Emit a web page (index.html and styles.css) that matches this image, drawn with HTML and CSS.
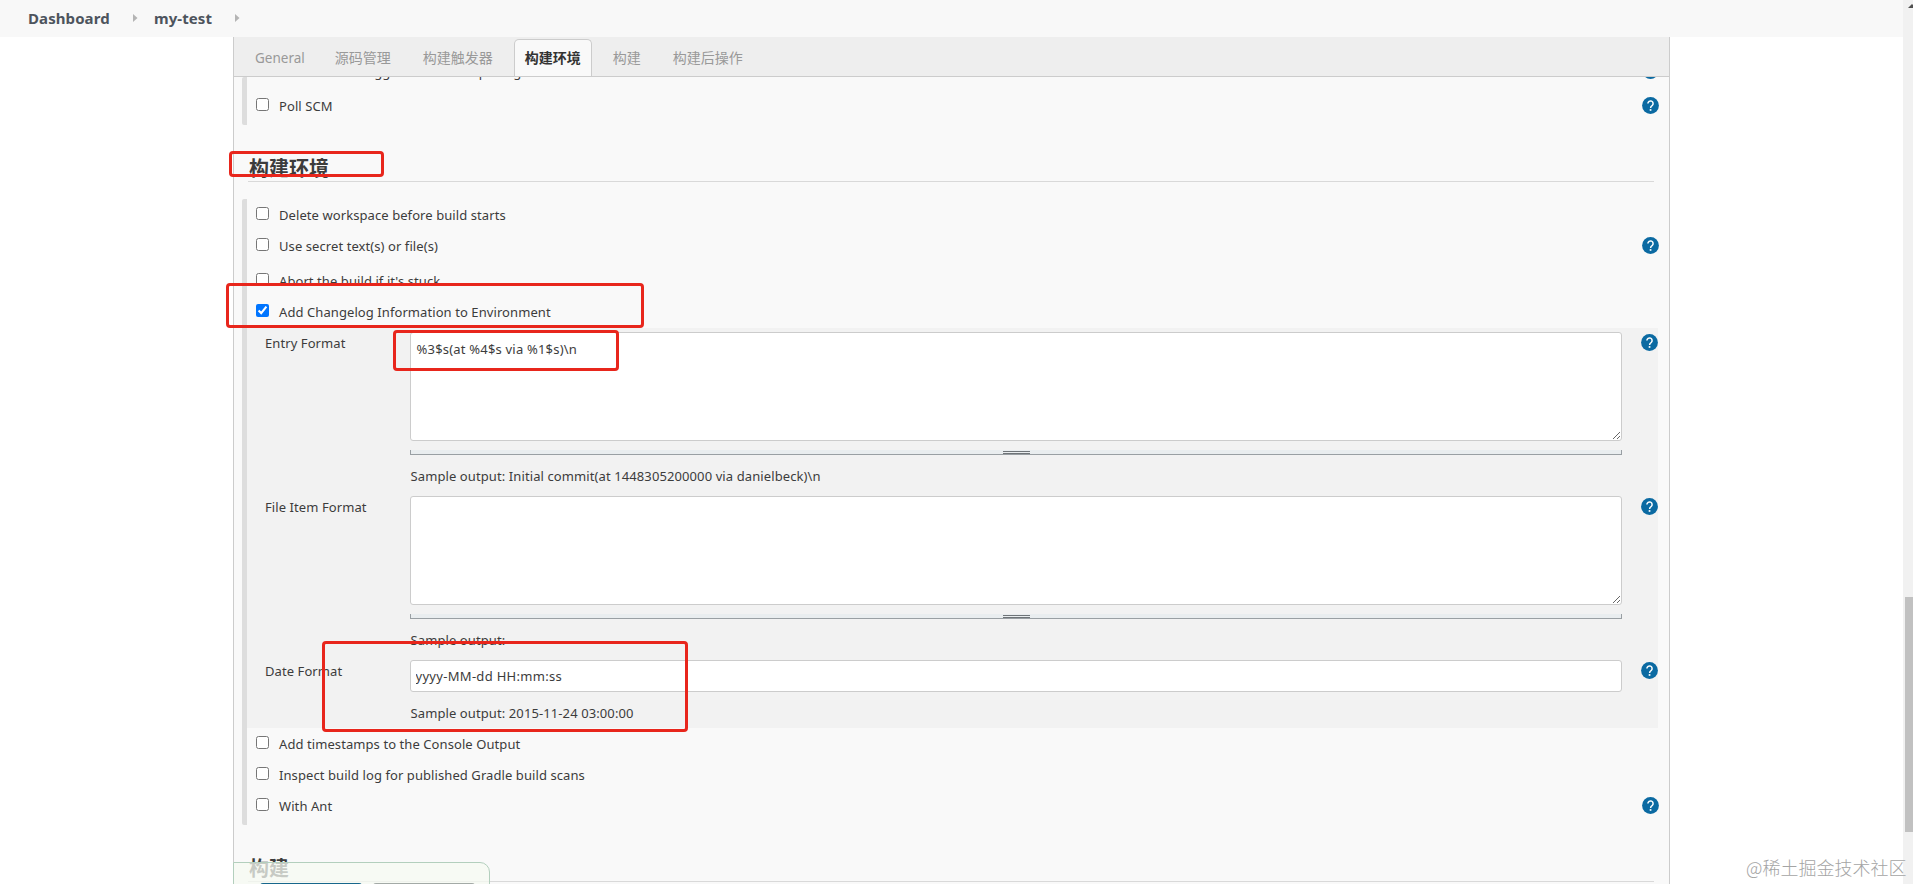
FILE: index.html
```html
<!DOCTYPE html>
<html lang="zh-CN">
<head>
<meta charset="utf-8">
<title>my-test Config</title>
<link rel="stylesheet" href="styles.css">
</head>
<body>
<svg class="sprite" width="0" height="0">
  <symbol id="help" viewBox="0 0 17 17">
    <circle cx="8.5" cy="8.5" r="8.4" fill="#0b6aa2"/>
    <path d="M5.9 6.5a2.6 2.6 0 1 1 4.3 2c-.9.8-1.6 1.2-1.6 2.5" fill="none" stroke="#fff" stroke-width="1.5"/>
    <rect x="7.7" y="12.1" width="1.7" height="1.7" fill="#fff"/>
  </symbol>
  <symbol id="crumb" viewBox="0 0 5 8"><path d="M0 0L4.5 4L0 8z" fill="#b4b4b4"/></symbol>
</svg>
<header class="breadcrumbs">
  <span class="crumb dash">Dashboard</span><svg class="sep"><use href="#crumb"/></svg>
  <span class="crumb job">my-test</span><svg class="sep last"><use href="#crumb"/></svg>
</header>
<main class="panel">
  <nav class="tabs">
    <span class="tab general">General</span>
    <span class="tab">源码管理</span>
    <span class="tab">构建触发器</span>
    <span class="tab active">构建环境</span>
    <span class="tab">构建</span>
    <span class="tab">构建后操作</span>
  </nav>
  <div class="content">
    <section class="group triggers">
      <div class="row cut"><input type="checkbox"><label>GitHub hook trigger for GITScm polling</label><svg class="help"><use href="#help"/></svg></div>
      <div class="row"><input type="checkbox"><label>Poll SCM</label><svg class="help"><use href="#help"/></svg></div>
    </section>
    <h2 class="title">构建环境</h2>
    <section class="group env">
      <div class="row"><input type="checkbox"><label>Delete workspace before build starts</label></div>
      <div class="row"><input type="checkbox"><label>Use secret text(s) or file(s)</label><svg class="help"><use href="#help"/></svg></div>
      <div class="row abort"><input type="checkbox"><label>Abort the build if it's stuck</label></div>
      <div class="row"><input type="checkbox" checked><label>Add Changelog Information to Environment</label></div>
      <div class="nested">
        <div class="field tall">
          <label>Entry Format</label>
          <div class="control"><textarea spellcheck="false">%3$s(at %4$s via %1$s)\n</textarea><div class="handle"></div><p>Sample output: Initial commit(at 1448305200000 via danielbeck)\n</p></div>
          <svg class="help"><use href="#help"/></svg>
        </div>
        <div class="field tall">
          <label>File Item Format</label>
          <div class="control"><textarea spellcheck="false"></textarea><div class="handle"></div><p>Sample output:</p></div>
          <svg class="help"><use href="#help"/></svg>
        </div>
        <div class="field">
          <label>Date Format</label>
          <div class="control"><input class="text" type="text" value="yyyy-MM-dd HH:mm:ss"><p>Sample output: 2015-11-24 03:00:00</p></div>
          <svg class="help"><use href="#help"/></svg>
        </div>
      </div>
      <div class="row"><input type="checkbox"><label>Add timestamps to the Console Output</label></div>
      <div class="row"><input type="checkbox"><label>Inspect build log for published Gradle build scans</label></div>
      <div class="row"><input type="checkbox"><label>With Ant</label><svg class="help"><use href="#help"/></svg></div>
    </section>
    <h2 class="title build">构建</h2>
  </div>
</main>
<div class="savebar"><span class="btn primary"></span><span class="btn"></span></div>
<div class="mark m1"></div>
<div class="mark m2"></div>
<div class="mark m3"></div>
<div class="mark m4"></div>
<div class="scrollbar"><svg class="up" viewBox="0 0 8 4"><path d="M0 4L4 0L8 4z" fill="#505050"/></svg><div class="thumb"></div></div>
<div class="watermark">@稀土掘金技术社区</div>
</body>
</html>
```
FILE: styles.css
```css
* { box-sizing: border-box; }
body {
  margin: 0;
  width: 1913px;
  height: 884px;
  overflow: hidden;
  position: relative;
  background: #fff;
  color: #3c3c3c;
  font: 13px/20px "Noto Sans", "Noto Sans CJK SC", sans-serif;
  letter-spacing: .08px;
}
.sprite { position: absolute; }

.breadcrumbs {
  height: 37px;
  padding: 0 0 2px 28px;
  display: flex;
  align-items: center;
  background: #f8f8f8;
}
.crumb { font-weight: 700; font-size: 15px; color: #4d545d; white-space: nowrap; }
.dash { width: 105px; }
.job { width: 81px; }
.sep { width: 5px; height: 8px; margin-right: 16px; }

.panel {
  width: 1437px;
  height: 847px;
  margin-left: 233px;
  border: solid #ccc;
  border-width: 0 1px;
  background: #f9f9f9;
  overflow: hidden;
}
.tabs {
  height: 40px;
  padding: 2px 0 0 10px;
  display: flex;
  background: #eee;
  border-bottom: 1px solid #ccc;
}
.tab {
  height: 37px;
  padding: 0 10px;
  margin-right: 10px;
  border: 1px solid transparent;
  line-height: 36px;
  font-size: 14px;
  letter-spacing: 0;
  color: #999;
  white-space: nowrap;
}
.tab.general { padding-right: 8px; font-size: 13.5px; line-height: 37px; }
.tab.active {
  height: 37px;
  background: #f9f9f9;
  border-color: #ccc;
  border-bottom: 0;
  border-radius: 5px 5px 0 0;
  font-weight: 700;
  color: #333;
}

.content { height: 807px; padding-left: 8px; overflow: hidden; }
.group {
  border-left: 5px solid #ddd;
  border-radius: 2px;
  margin-right: 9px;
}
.triggers { height: 48px; display: flow-root; }
.row {
  height: 31px;
  display: flex;
  align-items: center;
  padding-left: 9px;
}
.row.cut { height: 31px; margin-top: -21px; margin-bottom: 3px; }
.cut .help { position: relative; top: -1px; }
.row input { width: 13px; height: 13px; margin: 0 10px 2px 0; flex: none; }
.row label { flex: 1; white-space: nowrap; padding-top: 1px; }
.help { width: 17px; height: 17px; margin-right: 1.5px; flex: none; }
.row .help { margin-bottom: 1px; }
.title {
  margin: 24px 15px 17px 6px;
  height: 33px;
  padding-left: 1px;
  border-bottom: 1px solid #d9d9d9;
  font-size: 20px;
  line-height: 39px;
  letter-spacing: 0;
}
.env { height: 626px; }
.abort { margin-top: 4px; }
.nested {
  height: 400px;
  margin: 1px 2px 0 0;
  padding: 4px 0 0 18px;
  background: #f2f2f2;
}
.field { display: flex; }
.field.tall { height: 164px; }
.field > label { width: 145px; padding-top: 1px; white-space: nowrap; }
.field > .help { margin: 2px 0 0 19.5px; }
.control { width: 1212px; }
textarea, .text {
  display: block;
  width: 1212px;
  border: 1px solid #ccc;
  border-radius: 3px;
  background: #fff;
  color: #3c3c3c;
  font: inherit;
  letter-spacing: .2px;
  outline: 0;
}
textarea { height: 109px; margin: 0; padding: 6px; }
.text { height: 32px; padding: 1px 5px; margin: 0; letter-spacing: .3px; }
.handle {
  height: 5px;
  margin-top: 9px;
  border: solid #999fa3;
  border-width: 0 1px 1px;
  background: linear-gradient(#6f7478, #6f7478) 592px 1px / 27px 1px no-repeat,
    linear-gradient(#6f7478, #6f7478) 592px 3px / 27px 1px no-repeat, #e9edef;
}
p { margin: 0; padding-left: 1px; line-height: 20px; letter-spacing: .1px; white-space: nowrap; }
.handle + p { margin-top: 11px; }
.text + p { margin-top: 11px; }

.title.build { margin-top: 24px; }

.savebar {
  position: absolute;
  left: 233px;
  top: 862px;
  width: 257px;
  height: 60px;
  padding: 20px 0 0 26px;
  display: flex;
  gap: 11px;
  background: rgba(245, 250, 242, .75);
  border: 1px solid #b3cfbd;
  border-radius: 0 10px 0 0;
}
.btn { width: 102px; height: 30px; border-radius: 3px; background: #a3aaa6; }
.btn.primary { background: #17678c; }

.mark { position: absolute; border: 3px solid #e8261c; border-radius: 4px; }
.m1 { left: 229px; top: 151px; width: 155px; height: 26px; }
.m2 { left: 226px; top: 283px; width: 418px; height: 45px; }
.m3 { left: 393px; top: 330px; width: 226px; height: 41px; }
.m4 { left: 322px; top: 641px; width: 366px; height: 91px; }

.scrollbar { position: absolute; right: 0; top: 0; width: 10px; height: 884px; padding-left: 2px; background: #f1f1f1; overflow: hidden; }
.up { display: block; width: 8px; height: 4px; margin: 4px 0 0 3px; }
.thumb { height: 235px; margin-top: 589px; background: #c1c1c1; }
.watermark {
  position: absolute;
  left: 1746px;
  top: 854px;
  font: 300 18px/26px "Noto Sans CJK SC", sans-serif;
  letter-spacing: 0;
  color: #a4a4a4;
  white-space: nowrap;
}
```
